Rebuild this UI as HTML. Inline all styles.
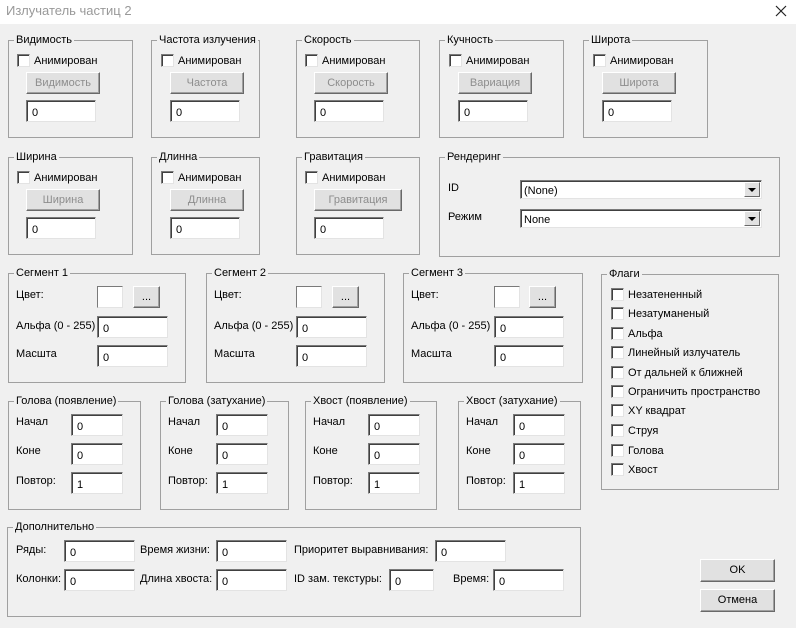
<!DOCTYPE html>
<html><head><meta charset="utf-8"><style>
*{box-sizing:border-box;margin:0;padding:0}
body{width:796px;height:628px;background:#f0f0f0;position:relative;overflow:hidden;font-family:"Liberation Sans",Tahoma,sans-serif;font-size:11px;color:#000}
.a{position:absolute;white-space:nowrap;line-height:14px;margin-top:1px}
.tb{position:absolute;left:0;top:0;width:796px;height:24px;background:#fff}
.g{position:absolute;border:1px solid #a0a0a0}
.g>span{position:absolute;left:5px;top:-8px;background:#f0f0f0;padding:0 2px;line-height:14px;white-space:nowrap}
.e{position:absolute;background:#fff;border-top:1px solid #7a7a7a;border-left:1px solid #7a7a7a;border-right:1px solid #e3e3e3;border-bottom:1px solid #e3e3e3;box-shadow:inset 1px 1px 0 #404040;padding:5px 0 0 5px;line-height:14px}
.b{position:absolute;background:#e1e1e1;border-top:1px solid #fff;border-left:1px solid #fff;border-right:1px solid #696969;border-bottom:1px solid #696969;box-shadow:inset -1px -1px 0 #a0a0a0;text-align:center;line-height:20px}
.d{color:#8d8d8d}
.c{position:absolute;width:13px;height:13px;background:#fff;border-top:1px solid #7a7a7a;border-left:1px solid #7a7a7a;border-right:1px solid #e3e3e3;border-bottom:1px solid #e3e3e3;box-shadow:inset 1px 1px 0 #404040}
.cb{position:absolute;background:#fff;border-top:1px solid #7a7a7a;border-left:1px solid #7a7a7a;border-right:1px solid #e3e3e3;border-bottom:1px solid #e3e3e3;box-shadow:inset 1px 1px 0 #404040;padding:3px 0 0 3px;line-height:14px}
.cb i{position:absolute;right:1px;top:1px;width:16px;height:15px;background:#e1e1e1;border-top:1px solid #fff;border-left:1px solid #fff;border-right:1px solid #696969;border-bottom:1px solid #696969}
.cb i:after{content:"";position:absolute;left:3px;top:5px;border-left:4px solid transparent;border-right:4px solid transparent;border-top:4px solid #000}
</style></head><body>
<div class="tb"></div>
<div class="a" style="left:6px;top:3px;color:#999;font-size:13px">Излучатель частиц 2</div>
<svg style="position:absolute;left:775px;top:5px" width="12" height="12"><path d="M1 1L11 11M11 1L1 11" stroke="#222" stroke-width="1.2"/></svg>

<!-- row 1 -->
<div class="g" style="left:8px;top:40px;width:125px;height:98px"><span>Видимость</span></div>
<div class="c" style="left:17px;top:54px"></div><div class="a" style="left:34px;top:53px">Анимирован</div>
<div class="b d" style="left:26px;top:72px;width:74px;height:22px">Видимость</div>
<div class="e" style="left:26px;top:100px;width:70px;height:22px">0</div>

<div class="g" style="left:151px;top:40px;width:109px;height:98px"><span>Частота излучения</span></div>
<div class="c" style="left:161px;top:54px"></div><div class="a" style="left:178px;top:53px">Анимирован</div>
<div class="b d" style="left:170px;top:72px;width:74px;height:22px">Частота</div>
<div class="e" style="left:170px;top:100px;width:70px;height:22px">0</div>

<div class="g" style="left:296px;top:40px;width:124px;height:98px"><span>Скорость</span></div>
<div class="c" style="left:305px;top:54px"></div><div class="a" style="left:322px;top:53px">Анимирован</div>
<div class="b d" style="left:314px;top:72px;width:74px;height:22px">Скорость</div>
<div class="e" style="left:314px;top:100px;width:70px;height:22px">0</div>

<div class="g" style="left:439px;top:40px;width:125px;height:98px"><span>Кучность</span></div>
<div class="c" style="left:449px;top:54px"></div><div class="a" style="left:466px;top:53px">Анимирован</div>
<div class="b d" style="left:458px;top:72px;width:74px;height:22px">Вариация</div>
<div class="e" style="left:458px;top:100px;width:70px;height:22px">0</div>

<div class="g" style="left:583px;top:40px;width:125px;height:98px"><span>Широта</span></div>
<div class="c" style="left:593px;top:54px"></div><div class="a" style="left:610px;top:53px">Анимирован</div>
<div class="b d" style="left:602px;top:72px;width:74px;height:22px">Широта</div>
<div class="e" style="left:602px;top:100px;width:70px;height:22px">0</div>

<!-- row 2 -->
<div class="g" style="left:8px;top:157px;width:125px;height:98px"><span>Ширина</span></div>
<div class="c" style="left:17px;top:171px"></div><div class="a" style="left:34px;top:170px">Анимирован</div>
<div class="b d" style="left:26px;top:189px;width:74px;height:22px">Ширина</div>
<div class="e" style="left:26px;top:217px;width:70px;height:22px">0</div>

<div class="g" style="left:151px;top:157px;width:109px;height:98px"><span>Длинна</span></div>
<div class="c" style="left:161px;top:171px"></div><div class="a" style="left:178px;top:170px">Анимирован</div>
<div class="b d" style="left:170px;top:189px;width:74px;height:22px">Длинна</div>
<div class="e" style="left:170px;top:217px;width:70px;height:22px">0</div>

<div class="g" style="left:296px;top:157px;width:124px;height:98px"><span>Гравитация</span></div>
<div class="c" style="left:305px;top:171px"></div><div class="a" style="left:322px;top:170px">Анимирован</div>
<div class="b d" style="left:314px;top:189px;width:88px;height:22px">Гравитация</div>
<div class="e" style="left:314px;top:217px;width:70px;height:22px">0</div>

<div class="g" style="left:439px;top:157px;width:341px;height:100px"><span>Рендеринг</span></div>
<div class="a" style="left:448px;top:180px">ID</div>
<div class="cb" style="left:520px;top:180px;width:242px;height:19px">(None)<i></i></div>
<div class="a" style="left:448px;top:209px">Режим</div>
<div class="cb" style="left:520px;top:209px;width:242px;height:19px">None<i></i></div>

<!-- segments -->
<div class="g" style="left:8px;top:273px;width:178px;height:110px"><span>Сегмент 1</span></div>
<div class="a" style="left:16px;top:287px">Цвет:</div>
<div class="e" style="left:97px;top:286px;width:26px;height:22px;box-shadow:none"></div>
<div class="b" style="left:133px;top:286px;width:27px;height:22px">...</div>
<div class="a" style="left:16px;top:318px">Альфа (0 - 255)</div>
<div class="e" style="left:97px;top:316px;width:71px;height:22px">0</div>
<div class="a" style="left:16px;top:346px">Масшта</div>
<div class="e" style="left:97px;top:345px;width:71px;height:22px">0</div>

<div class="g" style="left:206px;top:273px;width:179px;height:110px"><span>Сегмент 2</span></div>
<div class="a" style="left:214px;top:287px">Цвет:</div>
<div class="e" style="left:296px;top:286px;width:26px;height:22px;box-shadow:none"></div>
<div class="b" style="left:332px;top:286px;width:27px;height:22px">...</div>
<div class="a" style="left:214px;top:318px">Альфа (0 - 255)</div>
<div class="e" style="left:296px;top:316px;width:71px;height:22px">0</div>
<div class="a" style="left:214px;top:346px">Масшта</div>
<div class="e" style="left:296px;top:345px;width:71px;height:22px">0</div>

<div class="g" style="left:403px;top:273px;width:180px;height:110px"><span>Сегмент 3</span></div>
<div class="a" style="left:411px;top:287px">Цвет:</div>
<div class="e" style="left:494px;top:286px;width:26px;height:22px;box-shadow:none"></div>
<div class="b" style="left:529px;top:286px;width:27px;height:22px">...</div>
<div class="a" style="left:411px;top:318px">Альфа (0 - 255)</div>
<div class="e" style="left:494px;top:316px;width:70px;height:22px">0</div>
<div class="a" style="left:411px;top:346px">Масшта</div>
<div class="e" style="left:494px;top:345px;width:70px;height:22px">0</div>

<!-- flags -->
<div class="g" style="left:601px;top:274px;width:178px;height:216px"><span>Флаги</span></div>
<div class="c" style="left:611px;top:288px"></div><div class="a" style="left:628px;top:287px">Незатененный</div>
<div class="c" style="left:611px;top:307px"></div><div class="a" style="left:628px;top:306px">Незатуманеный</div>
<div class="c" style="left:611px;top:327px"></div><div class="a" style="left:628px;top:326px">Альфа</div>
<div class="c" style="left:611px;top:346px"></div><div class="a" style="left:628px;top:345px">Линейный излучатель</div>
<div class="c" style="left:611px;top:366px"></div><div class="a" style="left:628px;top:365px">От дальней к ближней</div>
<div class="c" style="left:611px;top:385px"></div><div class="a" style="left:628px;top:384px">Ограничить пространство</div>
<div class="c" style="left:611px;top:404px"></div><div class="a" style="left:628px;top:403px">XY квадрат</div>
<div class="c" style="left:611px;top:424px"></div><div class="a" style="left:628px;top:423px">Струя</div>
<div class="c" style="left:611px;top:444px"></div><div class="a" style="left:628px;top:443px">Голова</div>
<div class="c" style="left:611px;top:463px"></div><div class="a" style="left:628px;top:462px">Хвост</div>

<!-- head/tail -->
<div class="g" style="left:8px;top:401px;width:133px;height:109px"><span>Голова (появление)</span></div>
<div class="a" style="left:16px;top:414px">Начал</div><div class="e" style="left:71px;top:414px;width:52px;height:22px">0</div>
<div class="a" style="left:16px;top:443px">Коне</div><div class="e" style="left:71px;top:443px;width:52px;height:22px">0</div>
<div class="a" style="left:16px;top:473px">Повтор:</div><div class="e" style="left:71px;top:472px;width:52px;height:22px">1</div>

<div class="g" style="left:160px;top:401px;width:129px;height:109px"><span>Голова (затухание)</span></div>
<div class="a" style="left:168px;top:414px">Начал</div><div class="e" style="left:216px;top:414px;width:52px;height:22px">0</div>
<div class="a" style="left:168px;top:443px">Коне</div><div class="e" style="left:216px;top:443px;width:52px;height:22px">0</div>
<div class="a" style="left:168px;top:473px">Повтор:</div><div class="e" style="left:216px;top:472px;width:52px;height:22px">1</div>

<div class="g" style="left:305px;top:401px;width:132px;height:109px"><span>Хвост (появление)</span></div>
<div class="a" style="left:313px;top:414px">Начал</div><div class="e" style="left:368px;top:414px;width:52px;height:22px">0</div>
<div class="a" style="left:313px;top:443px">Коне</div><div class="e" style="left:368px;top:443px;width:52px;height:22px">0</div>
<div class="a" style="left:313px;top:473px">Повтор:</div><div class="e" style="left:368px;top:472px;width:52px;height:22px">1</div>

<div class="g" style="left:458px;top:401px;width:123px;height:109px"><span>Хвост (затухание)</span></div>
<div class="a" style="left:466px;top:414px">Начал</div><div class="e" style="left:513px;top:414px;width:52px;height:22px">0</div>
<div class="a" style="left:466px;top:443px">Коне</div><div class="e" style="left:513px;top:443px;width:52px;height:22px">0</div>
<div class="a" style="left:466px;top:473px">Повтор:</div><div class="e" style="left:513px;top:472px;width:52px;height:22px">1</div>

<!-- extra -->
<div class="g" style="left:7px;top:527px;width:574px;height:90px"><span>Дополнительно</span></div>
<div class="a" style="left:16px;top:542px">Ряды:</div><div class="e" style="left:64px;top:540px;width:71px;height:22px">0</div>
<div class="a" style="left:140px;top:542px">Время жизни:</div><div class="e" style="left:216px;top:540px;width:71px;height:22px">0</div>
<div class="a" style="left:294px;top:542px">Приоритет выравнивания:</div><div class="e" style="left:435px;top:540px;width:71px;height:22px">0</div>
<div class="a" style="left:16px;top:571px">Колонки:</div><div class="e" style="left:64px;top:569px;width:71px;height:22px">0</div>
<div class="a" style="left:140px;top:571px">Длина хвоста:</div><div class="e" style="left:216px;top:569px;width:71px;height:22px">0</div>
<div class="a" style="left:294px;top:571px">ID зам. текстуры:</div><div class="e" style="left:389px;top:569px;width:45px;height:22px">0</div>
<div class="a" style="left:453px;top:571px">Время:</div><div class="e" style="left:493px;top:569px;width:71px;height:22px">0</div>

<div class="b" style="left:700px;top:559px;width:75px;height:23px;line-height:20px">OK</div>
<div class="b" style="left:700px;top:589px;width:75px;height:23px;line-height:20px">Отмена</div>
</body></html>
